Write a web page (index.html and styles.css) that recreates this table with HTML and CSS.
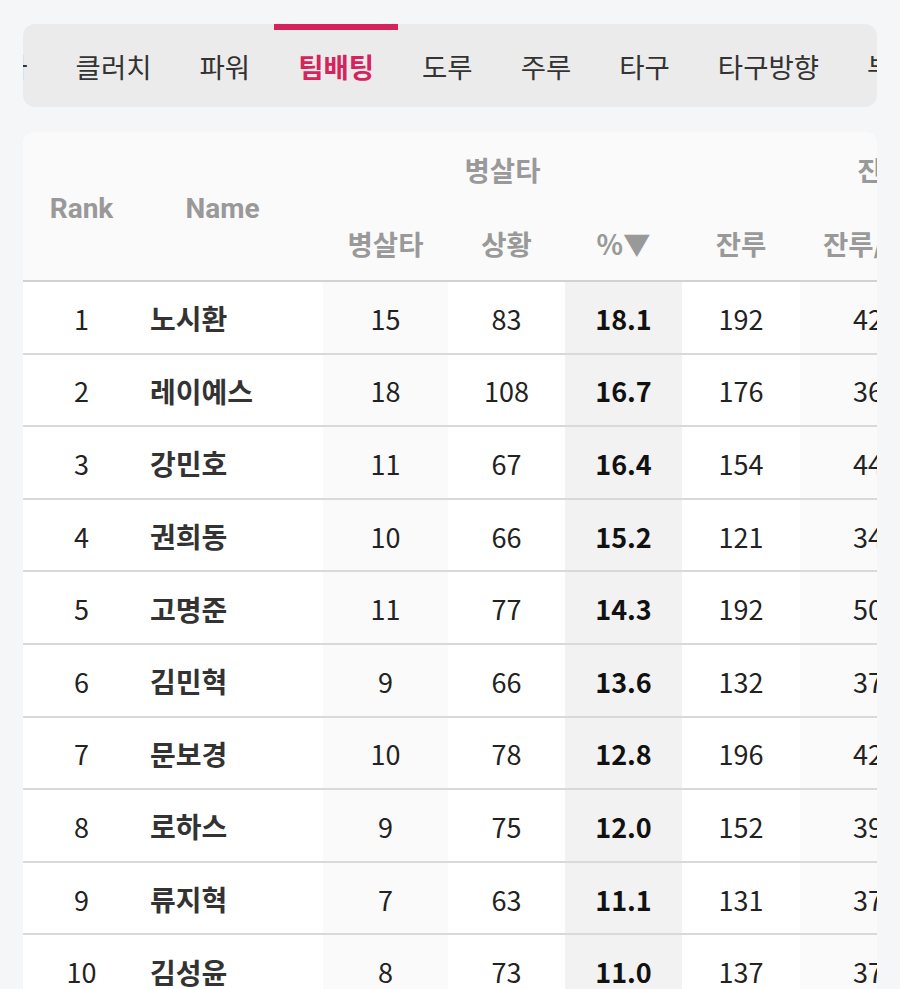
FILE: index.html
```html
<!DOCTYPE html>
<html lang="ko">
<head>
<meta charset="utf-8">
<title>팀배팅</title>
<link rel="stylesheet" href="styles.css">
</head>
<body>
<div class="page">
  <nav class="tabbar">
    <div class="tabs">
      <span class="tab">안타</span>
      <span class="tab">클러치</span>
      <span class="tab">파워</span>
      <span class="tab active">팀배팅</span>
      <span class="tab">도루</span>
      <span class="tab">주루</span>
      <span class="tab">타구</span>
      <span class="tab">타구방향</span>
      <span class="tab">부상</span>
    </div>
  </nav>

  <section class="card">
    <div class="table">
      <div class="th rank-h">Rank</div>
      <div class="th name-h">Name</div>
      <div class="th spacer-h"></div>
      <div class="th group g1">병살타</div>
      <div class="th group g2">진루타</div>
      <div class="th sub">병살타</div>
      <div class="th sub">상황</div>
      <div class="th sub">%▼</div>
      <div class="th sub">잔루</div>
      <div class="th sub sub-last">잔루/경기</div>

      <div class="row"><div class="td rank">1</div><div class="td name">노시환</div><div class="td sp"></div><div class="td c1">15</div><div class="td c2">83</div><div class="td c3">18.1</div><div class="td c4">192</div><div class="td c5">42.7</div></div>
      <div class="row"><div class="td rank">2</div><div class="td name">레이예스</div><div class="td sp"></div><div class="td c1">18</div><div class="td c2">108</div><div class="td c3">16.7</div><div class="td c4">176</div><div class="td c5">36.1</div></div>
      <div class="row"><div class="td rank">3</div><div class="td name">강민호</div><div class="td sp"></div><div class="td c1">11</div><div class="td c2">67</div><div class="td c3">16.4</div><div class="td c4">154</div><div class="td c5">44.0</div></div>
      <div class="row"><div class="td rank">4</div><div class="td name">권희동</div><div class="td sp"></div><div class="td c1">10</div><div class="td c2">66</div><div class="td c3">15.2</div><div class="td c4">121</div><div class="td c5">34.5</div></div>
      <div class="row"><div class="td rank">5</div><div class="td name">고명준</div><div class="td sp"></div><div class="td c1">11</div><div class="td c2">77</div><div class="td c3">14.3</div><div class="td c4">192</div><div class="td c5">50.2</div></div>
      <div class="row"><div class="td rank">6</div><div class="td name">김민혁</div><div class="td sp"></div><div class="td c1">9</div><div class="td c2">66</div><div class="td c3">13.6</div><div class="td c4">132</div><div class="td c5">37.4</div></div>
      <div class="row"><div class="td rank">7</div><div class="td name">문보경</div><div class="td sp"></div><div class="td c1">10</div><div class="td c2">78</div><div class="td c3">12.8</div><div class="td c4">196</div><div class="td c5">42.9</div></div>
      <div class="row"><div class="td rank">8</div><div class="td name">로하스</div><div class="td sp"></div><div class="td c1">9</div><div class="td c2">75</div><div class="td c3">12.0</div><div class="td c4">152</div><div class="td c5">39.3</div></div>
      <div class="row"><div class="td rank">9</div><div class="td name">류지혁</div><div class="td sp"></div><div class="td c1">7</div><div class="td c2">63</div><div class="td c3">11.1</div><div class="td c4">131</div><div class="td c5">37.1</div></div>
      <div class="row"><div class="td rank">10</div><div class="td name">김성윤</div><div class="td sp"></div><div class="td c1">8</div><div class="td c2">73</div><div class="td c3">11.0</div><div class="td c4">137</div><div class="td c5">37.6</div></div>
    </div>
  </section>
</div>
</body>
</html>
```

FILE: styles.css
```css
html {
  overflow: hidden;
}
* {
  box-sizing: border-box;
}
body {
  margin: 0;
  background: #f5f6f8;
  font-family: "Noto Sans CJK KR", "Noto Sans", sans-serif;
  color: #222;
}
.page {
  height: 989px;
  overflow: hidden;
  padding: 24px 23px 0;
}

/* Tabs */
.tabbar {
  height: 83px;
  background: #ebebeb;
  border-radius: 12px;
  overflow: hidden;
}
.tabs {
  display: flex;
  height: 100%;
  margin-left: -70px;
  white-space: nowrap;
}
.tab {
  flex: none;
  display: flex;
  align-items: center;
  padding: 0 24px 6px;
  font-size: 27.5px;
  color: #333;
  height: 100%;
  border-top: 6px solid transparent;
}
.tab.active {
  border-top-color: #d6235b;
  color: #d6235b;
  font-weight: 700;
}

/* Card */
.card {
  margin-top: 25px;
  background: #fff;
  border-radius: 12px 12px 0 0;
  overflow: hidden;
}
.table {
  display: grid;
  grid-template-columns: 117px 165px 18px 125px 117px 117px 118px 160px;
  grid-template-rows: 76px 74px;
  grid-auto-rows: 72.6px;
}
.row {
  display: contents;
}
.th {
  background: #fafafa;
  color: #999;
  font-weight: 700;
  font-size: 27.5px;
  display: flex;
  align-items: center;
  justify-content: center;
  white-space: nowrap;
}
.rank-h,
.name-h {
  grid-row: 1 / 3;
  font-family: Roboto, "Noto Sans CJK KR", sans-serif;
  font-size: 28px;
  border-bottom: 2px solid #d2d2d2;
  padding-top: 4px;
}
.spacer-h {
  grid-row: 1 / 3;
  border-bottom: 2px solid #d2d2d2;
}
.group {
  padding-bottom: 2px;
}
.g1 {
  grid-column: 4 / 7;
}
.g2 {
  grid-column: 7 / 9;
  justify-content: flex-start;
  padding-left: 175px;
}
.sub {
  border-bottom: 2px solid #d2d2d2;
  padding-bottom: 2px;
}
.sub-last {
  justify-content: flex-start;
  padding-left: 23px;
}

.td {
  display: flex;
  align-items: center;
  justify-content: center;
  font-size: 27px;
  border-bottom: 2px solid #d9d9d9;
  white-space: nowrap;
  color: #222;
  padding-top: 2px;
}
.td.name {
  justify-content: flex-start;
  padding-left: 10px;
  font-size: 28px;
  font-weight: 700;
  color: #333;
}
.c1,
.c5 {
  background: #fafafa;
}
.c3 {
  background: #f2f2f2;
  font-weight: 700;
  color: #111;
}
.c5 {
  justify-content: flex-start;
  padding-left: 53px;
}
```
